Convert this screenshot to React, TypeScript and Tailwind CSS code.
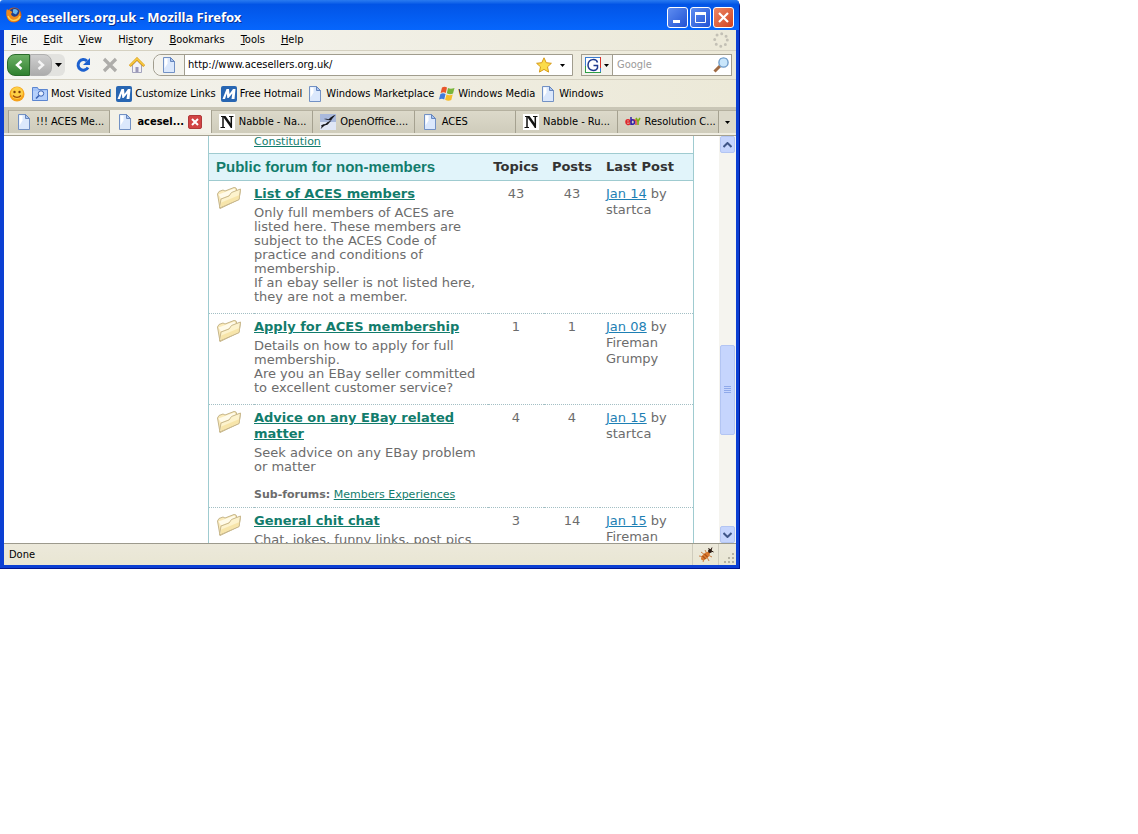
import type { ReactNode } from "react";

interface Forum {
  title: string;
  lines: string[];
  subForum?: string;
  topics: number;
  posts: number;
  date: string;
  author: string;
}

const forums: Forum[] = [
  {
    title: "List of ACES members",
    lines: [
      "Only full members of ACES are listed here. These members are subject to the ACES Code of practice and conditions of membership.",
      "If an ebay seller is not listed here, they are not a member.",
    ],
    topics: 43,
    posts: 43,
    date: "Jan 14",
    author: "startca",
  },
  {
    title: "Apply for ACES membership",
    lines: [
      "Details on how to apply for full membership.",
      "Are you an EBay seller committed to excellent customer service?",
    ],
    topics: 1,
    posts: 1,
    date: "Jan 08",
    author: "Fireman Grumpy",
  },
  {
    title: "Advice on any EBay related matter",
    lines: ["Seek advice on any EBay problem or matter"],
    subForum: "Members Experiences",
    topics: 4,
    posts: 4,
    date: "Jan 15",
    author: "startca",
  },
  {
    title: "General chit chat",
    lines: ["Chat, jokes, funny links, post pics"],
    topics: 3,
    posts: 14,
    date: "Jan 15",
    author: "Fireman",
  },
];

const menus = ["File", "Edit", "View", "History", "Bookmarks", "Tools", "Help"];
// Index of the underlined access key in each menu name
const accessKeys = [0, 0, 0, 2, 0, 0, 0];

function PageIcon() {
  return (
    <svg width="16" height="16" viewBox="0 0 16 16" className="shrink-0">
      <path d="M2.500 .5h7l4 4v11h-11z" fill="#dbe8fc" stroke="#7291c4" />
      <path d="M3.500 1.500h3v5l-3 5z" fill="#fff" />
      <path d="M9.500 .5v4h4z" fill="#a9c4f0" stroke="#6686bd" />
    </svg>
  );
}

function FirefoxIcon() {
  return (
    <svg width="16" height="16" viewBox="0 0 16 16" className="shrink-0">
      <circle cx="8" cy="8" r="7.500" fill="#d9600c" />
      <circle cx="8.500" cy="6.500" r="5.500" fill="#1f3f8c" />
      <path d="M7 2.500c2-1.500 4.500 0 5 2l-2 3-3-1.500z" fill="#6db6ea" />
      <path d="M1 2c1 1.500 2 1 3 1.500l2.500 1.500-1.500 2c1 2.500 3 3.500 6 2 2-1.500 2.500-3 2-5.500 2.500 4 1.500 8.500-2 10.500-4 2.500-8.500 .5-10-4C0 7 0 4 1 2z" fill="#f08a1c" />
      <path d="M2 9c1.500 3.500 4.500 5 8 4 2-.5 3.500-2 4-4" fill="none" stroke="#fdd253" strokeWidth="1.400" />
    </svg>
  );
}

function SmileyIcon() {
  return (
    <svg width="16" height="16" viewBox="0 0 16 16" className="shrink-0">
      <circle cx="8" cy="8" r="7.500" fill="#f6a21b" />
      <circle cx="8" cy="7" r="6" fill="#fdcf45" />
      <circle cx="5.500" cy="6" r="1.200" fill="#7c3c08" />
      <circle cx="10.500" cy="6" r="1.200" fill="#7c3c08" />
      <path d="M4 9.500c2 2.500 6 2.500 8 0" fill="none" stroke="#a14b08" strokeWidth="1.300" />
    </svg>
  );
}

function SearchFolderIcon() {
  return (
    <svg width="16" height="16" viewBox="0 0 16 16" className="shrink-0">
      <path d="M.5 1.500h5l1 2h9v11H.5z" fill="#a5c4f8" stroke="#5c86d0" />
      <path d="M1 5h14v9H1z" fill="#b5d0fb" />
      <circle cx="9" cy="7.500" r="2.700" fill="#e6f0ff" stroke="#3a62b4" />
      <path d="M7 9.500L4 12.500" stroke="#3a62b4" strokeWidth="1.600" />
    </svg>
  );
}

function MsnIcon() {
  return (
    <svg width="16" height="16" viewBox="0 0 16 16" className="shrink-0">
      <rect width="16" height="16" rx="2" fill="#2866b2" />
      <path d="M1.500 13L5.500 3H8l.5 5L12 3h2.500L13.500 13h-3l.8-5.500L7.500 12H6.300L5.800 7.500 4 13z" fill="#fff" />
    </svg>
  );
}

function WindowsIcon() {
  return (
    <svg width="16" height="16" viewBox="0 0 16 16" className="shrink-0">
      <path d="M3 1.500c2-1.300 3.500-1 5 0L6.800 6.900c-1.500-1-3-1-5.200 0z" fill="#e8562a" />
      <path d="M9 2c2 1 3.500 1 6.500 0l-1.500 5.500c-2 1-4 1-6.200-.3z" fill="#79b63a" />
      <path d="M1.400 8c2-1.200 3.500-1 5.100 0L5.200 13.500c-1.500-1-3-1-5.200 0z" fill="#3f7ade" />
      <path d="M7.500 8.500c2 1 4 1 6.200.1L12.300 14c-2 1-4 1-6.200-.3z" fill="#f6bd2c" />
    </svg>
  );
}

function NabbleIcon() {
  return (
    <svg width="16" height="16" viewBox="0 0 16 16" className="shrink-0">
      <rect width="16" height="16" fill="#fff" />
      <path d="M2 2.500h4M10 2.500h4.500M1.500 13.500h4.500" stroke="#111" strokeWidth="1.200" />
      <path d="M4 2.500v11M12.300 2.500v11" stroke="#111" strokeWidth="1.500" />
      <path d="M3.500 2h3L13 11v3h-1z" fill="#111" />
    </svg>
  );
}

function OpenOfficeIcon() {
  return (
    <svg width="16" height="16" viewBox="0 0 16 16" className="shrink-0">
      <rect width="16" height="16" fill="#a9b9dc" />
      <path d="M0 8h16v8H0z" fill="#dfe6f5" />
      <path d="M4 5c3-1 4 1 5 0 2-2 4-3.500 6.500-4-2 2-3 3.500-4.500 5.500-2 0-4-1-7-1.500z" fill="#15161c" />
      <path d="M1 11.500c3-2 4-1 5-2 2-2 3-2 5.500-3-2.500 2-3 3.500-4.500 4.500-3 0-4 2.500-6.500 4 1-1.500 1.500-2.500 .5-3.500z" fill="#15161c" />
    </svg>
  );
}

function EbayIcon() {
  return (
    <svg width="16" height="16" viewBox="0 0 16 16" className="shrink-0">
      <path d="M1.500 8h3.500c0-3-4-3-4 0s3 3 4 1.500" fill="none" stroke="#e0252b" strokeWidth="1.600" />
      <path d="M6 3v8M6 8c0-3 3.500-3 3.500 0s-3.500 3-3.500 0" fill="none" stroke="#3022a8" strokeWidth="1.500" />
      <path d="M8.500 6h2.500v5" fill="none" stroke="#e0252b" strokeWidth="1.200" />
      <path d="M11 4l2 3.500L15 4M13 7v4" fill="none" stroke="#7fae13" strokeWidth="1.600" />
    </svg>
  );
}

function ForumFolderIcon() {
  return (
    <svg width="26" height="24" viewBox="0 0 26 24">
      <path d="M1.500 8L3 5.500l4-1.500 2 1 9-3.500 2 .5 1 3 3.500-1.500-1.500 10L4 22.500z" fill="#faeab9" stroke="#c6b68b" />
      <path d="M2.500 8.500l16-6 1.500 4-15 6z" fill="#fffbea" />
      <path d="M3.500 22L5 13l8-3 2.500-3.500 9-3.500L23 13.500z" fill="#fdf3cd" stroke="#c9b88c" />
      <path d="M4.500 21l.8-4.500L23.500 9l-.8 4z" fill="#f3dc92" opacity=".6" />
    </svg>
  );
}

function Chevron({ up = false }: { up?: boolean }) {
  return (
    <svg width="9" height="6" viewBox="0 0 9 6">
      <path d={up ? "M.5 5l4-4 4 4" : "M.5 1l4 4 4-4"} fill="none" stroke="#3f5688" strokeWidth="2" />
    </svg>
  );
}

function DownArrow() {
  return (
    <svg width="5" height="3" viewBox="0 0 5 3" className="shrink-0">
      <path d="M0 0h5L2.500 3z" fill="#000" />
    </svg>
  );
}

function TitleBar() {
  const base =
    "flex size-[21px] items-center justify-center rounded-[3px] border border-white";
  return (
    <header className="flex h-[30px] items-center rounded-t-[3px] bg-linear-to-b from-[#2a7bf0] via-[#0254e6] via-15% to-[#0666fd] pl-1.5 pr-[5px]">
      <FirefoxIcon />
      <h1 className="ml-1 mt-1 flex-1 font-['Trebuchet_MS','Noto_Sans',sans-serif] text-[13px] font-bold text-white [text-shadow:1px_1px_#0b2f8c]">
        acesellers.org.uk - Mozilla Firefox
      </h1>
      <div className="mt-1 flex gap-0.5">
        <button aria-label="Minimize" className={`${base} bg-linear-to-br from-[#5f8df0] to-[#2251d4]`}>
          <svg width="13" height="13" viewBox="0 0 13 13">
            <path d="M2 9h7v3H2z" fill="#fff" />
          </svg>
        </button>
        <button aria-label="Maximize" className={`${base} bg-linear-to-br from-[#5f8df0] to-[#2251d4]`}>
          <svg width="13" height="13" viewBox="0 0 13 13">
            <path d="M1.500 1v10.500h10V1" fill="none" stroke="#fff" />
            <path d="M1 1h11v3H1z" fill="#fff" />
          </svg>
        </button>
        <button aria-label="Close" className={`${base} bg-linear-to-br from-[#ec8664] to-[#d0411d]`}>
          <svg width="13" height="13" viewBox="0 0 13 13">
            <path d="M2 2l9 9M11 2l-9 9" stroke="#fff" strokeWidth="2.200" />
          </svg>
        </button>
      </div>
    </header>
  );
}

function MenuBar() {
  return (
    <nav className="flex h-[21px] items-center gap-4 border-b border-[#d5d1c1] bg-linear-to-r from-[#f6f6f4] to-[#ece9d8] px-[7px]">
      {menus.map((name, i) => (
        <button key={name}>
          {name.slice(0, accessKeys[i])}
          <span className="underline">{name[accessKeys[i]]}</span>
          {name.slice(accessKeys[i] + 1)}
        </button>
      ))}
      <svg width="16" height="16" viewBox="0 0 16 16" className="ml-auto">
        <circle cx="8" cy="8" r="6.300" fill="none" stroke="#c3c0b5" strokeWidth="3" strokeLinecap="round" strokeDasharray="0 4.948" />
      </svg>
    </nav>
  );
}

function NavBar() {
  return (
    <div className="flex h-[29px] items-center border-b border-[#d5d1c1] bg-linear-to-r from-[#f5f5f2] to-[#ece9d8] pl-[3px] pr-1">
      <button aria-label="Back" className="flex h-[22px] w-[23px] items-center justify-center rounded-l-lg border border-[#2b6b2b] bg-linear-to-b from-[#6cb065] to-[#2f8130]">
        <svg width="10" height="12" viewBox="0 0 10 12">
          <path d="M7.500 2L3 6l4.500 4" fill="none" stroke="#fff" strokeWidth="2.400" />
        </svg>
      </button>
      <div className="flex rounded-r-md bg-[#e2e2df]">
        <button aria-label="Forward" className="flex h-[22px] w-[22px] items-center justify-center rounded-r-lg border border-[#b0b0b0] bg-linear-to-b from-[#cfcfcf] to-[#acacac]">
          <svg width="10" height="12" viewBox="0 0 10 12">
            <path d="M2.500 2L7 6l-4.500 4" fill="none" stroke="#f4f4f4" strokeWidth="2.400" />
          </svg>
        </button>
        <button aria-label="Recent pages" className="flex h-[22px] w-[13px] items-center justify-center">
          <svg width="7" height="4" viewBox="0 0 7 4">
            <path d="M0 0h7L3.500 4z" />
          </svg>
        </button>
      </div>
      <div className="ml-2.5 mr-2 flex gap-[11px]">
        <button aria-label="Reload">
          <svg width="16" height="16" viewBox="0 0 16 16">
            <path d="M12 4A5.300 5.300 0 1 0 13 10.500" fill="none" stroke="#1d61cf" strokeWidth="3" />
            <path d="M15 1v7H8z" fill="#1d61cf" />
          </svg>
        </button>
        <button aria-label="Stop">
          <svg width="16" height="16" viewBox="0 0 16 16">
            <path d="M2 2l12 12M14 2L2 14" stroke="#aeadaa" strokeWidth="3.200" />
          </svg>
        </button>
        <button aria-label="Home">
          <svg width="16" height="16" viewBox="0 0 16 16">
            <path d="M3.500 8v7.500h9V8L8 3.500z" fill="#f2f1f6" stroke="#a3a3bd" />
            <path d="M.8 9L8 1.800 15.200 9" fill="none" stroke="#d99a14" strokeWidth="2.600" />
            <path d="M1 8.500L8 1.700l7 6.800" fill="none" stroke="#f9cd44" strokeWidth="1.200" />
            <path d="M6.500 10h3v5h-3z" fill="#9a97b8" />
          </svg>
        </button>
      </div>
      <div className="flex h-[22px] flex-1 items-center rounded-l-lg border border-[#a19d8e] bg-white">
        <span className="flex h-full w-[31px] items-center justify-center rounded-l-lg border-r border-[#a19d8e] bg-[#f3f2ec]">
          <PageIcon />
        </span>
        <input aria-label="Address" defaultValue="http://www.acesellers.org.uk/" className="min-w-0 flex-1 pl-[3px] outline-none" />
        <button aria-label="Bookmark this page">
          <svg width="16" height="16" viewBox="0 0 16 16">
            <path d="M8 .8l2.200 4.900 5.200.6-3.900 3.500 1.100 5.300L8 12.400l-4.600 2.700 1.100-5.300L.6 6.300l5.200-.6z" fill="#fbdc4a" stroke="#d79a17" />
          </svg>
        </button>
        <button aria-label="Show history" className="flex h-full w-5 items-center justify-center">
          <DownArrow />
        </button>
      </div>
      <div className="ml-2 flex h-[22px] w-[151px] items-center border border-[#a19d8e] bg-white">
        <button aria-label="Search engine" className="flex h-full w-[31px] shrink-0 items-center justify-center gap-[3px] border-r border-[#a19d8e] bg-[#f3f2ec]">
          <svg width="16" height="16" viewBox="0 0 16 16">
            <rect x=".5" y=".5" width="15" height="15" fill="#fff" stroke="#3c7dd0" />
            <path d="M15.500 0v11" stroke="#d8332a" />
            <path d="M0 15.500h16M.5 9v7" stroke="#2e9e45" />
            <path d="M12.500 5.500C11.500 1.500 3.500 1 3 8c0 6.500 8 6.500 9.500 3V8.500H8.500" fill="none" stroke="#1f3a8e" strokeWidth="1.500" />
          </svg>
          <DownArrow />
        </button>
        <input aria-label="Search" placeholder="Google" className="min-w-0 flex-1 pl-1 outline-none placeholder:text-[#9a9a9a]" />
        <button aria-label="Go" className="mr-0.5">
          <svg width="16" height="16" viewBox="0 0 16 16">
            <path d="M7 9l-5.500 5.500" stroke="#a06b44" strokeWidth="3" />
            <circle cx="10.500" cy="5.500" r="4.600" fill="#c9e6fb" stroke="#6f9cc9" strokeWidth="1.400" />
          </svg>
        </button>
      </div>
    </div>
  );
}

function Bookmark({ icon, children }: { icon: ReactNode; children?: ReactNode }) {
  return (
    <a href="#" className="flex items-center gap-[3px] whitespace-nowrap">
      {icon}
      {children}
    </a>
  );
}

function BookmarksBar() {
  return (
    <div className="flex h-[27px] items-center gap-[5px] bg-linear-to-r from-[#f4f3ee] to-[#ece9d8] pl-[5px]">
      <button aria-label="Smileys" className="mr-0.5">
        <SmileyIcon />
      </button>
      <Bookmark icon={<SearchFolderIcon />}>Most Visited</Bookmark>
      <Bookmark icon={<MsnIcon />}>Customize Links</Bookmark>
      <Bookmark icon={<MsnIcon />}>Free Hotmail</Bookmark>
      <Bookmark icon={<PageIcon />}>Windows Marketplace</Bookmark>
      <Bookmark icon={<WindowsIcon />}>Windows Media</Bookmark>
      <Bookmark icon={<PageIcon />}>Windows</Bookmark>
    </div>
  );
}

function Tab({ icon, label, active }: { icon: ReactNode; label: string; active?: boolean }) {
  return (
    <div
      className={`flex h-full min-w-0 flex-1 items-center border-r border-r-[#a5a190] pl-[7px] ${
        active ? "bg-[#f3f1e8] font-bold" : "border-t border-t-[#b5b1a0] bg-linear-to-b from-[#dcd9ca] to-[#cfccbb]"
      }`}
    >
      <button role="tab" aria-selected={!!active} className="flex min-w-0 items-center gap-1 whitespace-nowrap">
        {icon}
        {label}
      </button>
      {active && (
        <button aria-label="Close tab" className="ml-1 flex size-[14px] shrink-0 items-center justify-center rounded-xs border border-[#b03a3a] bg-[#d24444]">
          <svg width="8" height="8" viewBox="0 0 8 8">
            <path d="M1 1l6 6M7 1L1 7" stroke="#fff" strokeWidth="2" />
          </svg>
        </button>
      )}
    </div>
  );
}

function TabStrip() {
  return (
    <div className="flex h-[29px] border-b border-[#a5a190] bg-[#c9c6b6]">
      <div className="flex min-w-0 flex-1 border-b-2 border-[#f0eee3] pl-1 pt-[3px]">
        <div role="tablist" className="flex min-w-0 flex-1 border-l border-[#a5a190]">
          <Tab icon={<PageIcon />} label="!!! ACES Me..." />
          <Tab icon={<PageIcon />} label="acesel..." active />
          <Tab icon={<NabbleIcon />} label="Nabble - Na..." />
          <Tab icon={<OpenOfficeIcon />} label="OpenOffice...." />
          <Tab icon={<PageIcon />} label="ACES" />
          <Tab icon={<NabbleIcon />} label="Nabble - Ru..." />
          <Tab icon={<EbayIcon />} label="Resolution C..." />
        </div>
        <button aria-label="List all tabs" className="flex w-[17px] items-center justify-center border-t border-[#b5b1a0] bg-[#dcd9ca]">
          <DownArrow />
        </button>
      </div>
    </div>
  );
}

function ForumRow({ forum }: { forum: Forum }) {
  const cell = "border-b border-dotted border-[#a3bfc4] pt-[5px]";
  return (
    <tr className="align-top">
      <td className={`${cell} pl-[7px]`}>
        <ForumFolderIcon />
      </td>
      <td className={`${cell} pb-[9px] pr-2 leading-[14px]`}>
        <a href="#" className="block pb-1 font-bold leading-4 text-[#127c6c] underline">
          {forum.title}
        </a>
        {forum.lines.map((line) => (
          <p key={line}>{line}</p>
        ))}
        {forum.subForum && (
          <p className="-mb-1 mt-3.5 text-[11px]">
            <b>Sub-forums:</b>{" "}
            <a href="#" className="text-[#127c6c] underline">
              {forum.subForum}
            </a>
          </p>
        )}
      </td>
      <td className={`${cell} text-center`}>{forum.topics}</td>
      <td className={`${cell} text-center`}>{forum.posts}</td>
      <td className={`${cell} pl-1.5 pr-4`}>
        <a href="#" className="text-[#1d7fb4] underline">
          {forum.date}
        </a>{" "}
        by {forum.author}
      </td>
    </tr>
  );
}

function ForumPage() {
  return (
    <main className="min-w-0 flex-1 pl-[204px] pr-[25px] font-['Verdana','DejaVu_Sans',sans-serif] text-[13px] leading-4 text-[#6c6c6c]">
      <div className="border-x border-[#9fcbd0]">
        <table className="w-full table-fixed border-separate border-spacing-0">
          <colgroup>
            <col className="w-[45px]" />
            <col />
            <col className="w-14" />
            <col className="w-14" />
            <col className="w-[93px]" />
          </colgroup>
          <tbody>
            <tr>
              <td />
              <td colSpan={4} className="pb-1.5 text-[11px] leading-[11px]">
                <a href="#" className="text-[#127c6c] underline">
                  Constitution
                </a>
              </td>
            </tr>
            <tr className="h-7 bg-[#e1f4fa] text-[#333] *:border-y *:border-[#9fcbd0]">
              <th colSpan={2} className="pl-[7px] text-left font-['Liberation_Sans',Arial,sans-serif] text-[15px] text-[#127c6c]">
                Public forum for non-members
              </th>
              <th>Topics</th>
              <th>Posts</th>
              <th className="pl-1.5 text-left">Last Post</th>
            </tr>
            {forums.map((forum) => (
              <ForumRow key={forum.title} forum={forum} />
            ))}
          </tbody>
        </table>
      </div>
    </main>
  );
}

function ScrollBar() {
  const piece = "flex w-[15px] items-center justify-center rounded-xs border border-[#b3c5f3] bg-[#c6d5fd]";
  return (
    <div aria-hidden="true" className="flex w-[17px] shrink-0 flex-col items-center bg-[#f5f4ef]">
      <div className={`${piece} h-[17px]`}>
        <Chevron up />
      </div>
      <div className="grow-[192]" />
      <div className={`${piece} h-[90px]`}>
        <svg width="7" height="8" viewBox="0 0 7 8">
          <path d="M0 .5h7M0 2.500h7M0 4.500h7M0 6.500h7" stroke="#8fa9ea" />
        </svg>
      </div>
      <div className="grow-[91]" />
      <div className={`${piece} h-[17px]`}>
        <Chevron />
      </div>
    </div>
  );
}

function StatusBar() {
  return (
    <footer className="flex h-[22px] items-center border-t border-[#9c9a8d] bg-linear-to-b from-[#ece9db] to-[#e9e6d3] pl-[5px]">
      <span className="flex-1">Done</span>
      <button aria-label="Firebug" className="flex h-full w-[27px] items-center justify-center border-x border-[#cfccbd]">
        <svg width="16" height="16" viewBox="0 0 16 16">
          <path d="M3 5l4 3M1 9l6 1M5 15l2-5M7 3l2 4M14 10l-4-2M11 14l-2-4" stroke="#c98048" />
          <ellipse cx="7.500" cy="9" rx="5.500" ry="2.800" fill="#d9782c" transform="rotate(-42 7.500 9)" />
          <path d="M4.500 9l3 3M6.500 7l3 3" stroke="#8a3c12" />
          <circle cx="12" cy="4" r="2" fill="#2b1a12" />
          <path d="M10.500 1l1.500 2M15.500 5l-2-1M14 .5l-1 2.500" stroke="#2b1a12" />
        </svg>
      </button>
      <svg width="17" height="14" viewBox="0 0 17 14" className="self-end">
        <path d="M13 2h2v2h-2zM9 6h2v2H9zM13 6h2v2h-2zM5 10h2v2H5zM9 10h2v2H9zM13 10h2v2h-2z" fill="#b5b2a2" />
      </svg>
    </footer>
  );
}

export default function App() {
  return (
    <div className="min-h-screen bg-white">
      <div className="w-full max-w-[740px] rounded-t-md border-b border-r border-[#001590] bg-[#0a3fd0] font-['Tahoma','DejaVu_Sans_Condensed','DejaVu_Sans',sans-serif] text-[11px] leading-4 text-black">
        <TitleBar />
        <div className="border-b-3 border-l-4 border-r-3 border-[#0b3fd3]">
          <MenuBar />
          <NavBar />
          <BookmarksBar />
          <TabStrip />
          <div className="flex h-[407px] overflow-hidden bg-white">
            <ForumPage />
            <ScrollBar />
          </div>
          <StatusBar />
        </div>
      </div>
    </div>
  );
}
